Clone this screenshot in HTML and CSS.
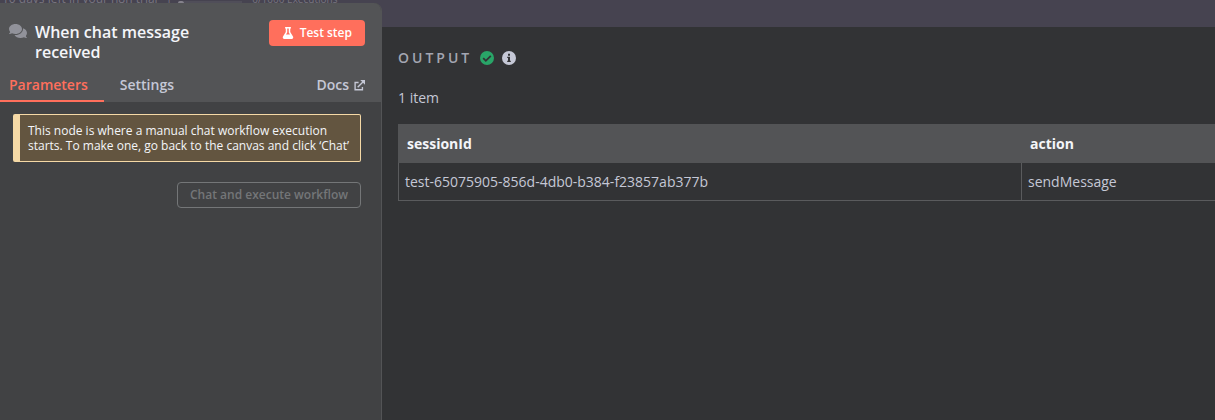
FILE: index.html
```html
<!DOCTYPE html>
<html lang="en">
<head>
    <meta charset="UTF-8">
    <meta name="viewport" content="width=device-width, initial-scale=1.0">
    <title>When chat message received</title>
    <link rel="stylesheet" href="styles.css">
</head>
<body>
    <div class="trial-bar">
        <span class="trial-days">10 days left in your n8n trial</span>
        <span class="trial-divider">|</span>
        <span class="trial-knob"></span>
        <span class="trial-track"></span>
        <span class="trial-usage">0/1000 Executions</span>
    </div>
    <div class="details">
        <section class="node-panel">
            <header class="node-header">
                <div class="node-heading">
                    <svg class="chat-icon" viewBox="0 0 576 512" aria-hidden="true"><path fill="currentColor" d="M416 192c0-88.400-93.100-160-208-160S0 103.600 0 192c0 34.300 14.100 65.900 38 92-13.400 30.200-35.500 54.200-35.800 54.500-2.200 2.300-2.800 5.700-1.500 8.700S4.800 352 8 352c36.600 0 66.900-12.300 88.700-25 32.200 15.700 70.300 25 111.300 25 114.900 0 208-71.600 208-160zm122 220c23.900-26 38-57.700 38-92 0-66.900-53.500-124.200-129.300-148.100.9 6.600 1.300 13.300 1.300 20.100 0 105.900-107.700 192-240 192-10.800 0-21.300-.8-31.700-1.900C207.800 439.600 281.800 480 368 480c41 0 79.100-9.200 111.300-25 21.800 12.700 52.100 25 88.700 25 3.200 0 6.100-1.900 7.300-4.800 1.300-2.900.7-6.300-1.500-8.700-.3-.3-22.400-24.200-35.800-54.500z"/></svg>
                    <h1>When chat message received</h1>
                    <button class="test-button" type="button">
                        <svg viewBox="0 0 448 512" aria-hidden="true"><path fill="currentColor" d="M437.200 403.500L320 215V64h8c13.300 0 24-10.700 24-24V24c0-13.300-10.700-24-24-24H120c-13.300 0-24 10.700-24 24v16c0 13.300 10.700 24 24 24h8v151L10.800 403.500C-18.500 450.600 15.300 512 70.900 512h306.200c55.700 0 89.400-61.500 60.100-108.500zM137.900 320l48.200-77.600c3.700-5.200 5.800-11.600 5.800-18.400V64h64v160c0 6.900 2.200 13.200 5.800 18.400l48.200 77.600z"/></svg>
                        Test step
                    </button>
                </div>
                <nav class="tabs">
                    <a class="tab tab-active" href="#parameters">Parameters</a>
                    <a class="tab" href="#settings">Settings</a>
                    <a class="tab tab-docs" href="#docs">Docs
                        <svg viewBox="0 0 12 12" aria-hidden="true"><path fill="none" stroke="currentColor" stroke-width="1.500" d="M5 2.700H1.200v8h8V7.500M4 8l6-6"/><path fill="currentColor" d="M6.800 0H12v5.200z"/></svg>
                    </a>
                </nav>
            </header>
            <div class="node-body">
                <p class="notice">This node is where a manual chat workflow execution starts. To make one, go back to the canvas and click ‘Chat’</p>
                <button class="chat-button" type="button" disabled>Chat and execute workflow</button>
            </div>
        </section>
        <main class="output">
            <div class="output-title">
                <h2>OUTPUT</h2>
                <svg class="icon-success" viewBox="0 0 14 14" aria-hidden="true"><circle cx="7" cy="7" r="7" fill="currentColor"/><path fill="none" stroke="#323335" stroke-width="1.800" d="M3.200 7.200l2.600 2.600 5-5"/></svg>
                <svg class="icon-info" viewBox="0 0 14 14" aria-hidden="true"><circle cx="7" cy="7" r="7" fill="currentColor"/><path fill="#323335" d="M6 2.700h2v2H6zM5.200 5.700H8v4h.8V11H5.200V9.700H6V7h-.8z"/></svg>
            </div>
            <p class="item-count">1 item</p>
            <table class="data">
                <thead>
                    <tr><th>sessionId</th><th class="col-action">action</th></tr>
                </thead>
                <tbody>
                    <tr><td>test-65075905-856d-4db0-b384-f23857ab377b</td><td>sendMessage</td></tr>
                </tbody>
            </table>
        </main>
    </div>
</body>
</html>
```
FILE: styles.css
```css
* {
    box-sizing: border-box;
}
body {
    display: flex;
    flex-direction: column;
    min-height: 100vh;
    margin: 0;
    background-color: #464350;
    color: #c5c8d6;
    font-family: "Open Sans", sans-serif;
    font-size: 14px;
}
h1, h2, p {
    margin: 0;
}
button {
    font-family: inherit;
    font-size: 12px;
    font-weight: 600;
    border-radius: 4px;
}

/* only the bottom edge of the trial banner shows above the panel */
.trial-bar {
    display: flex;
    align-items: flex-end;
    height: 3px;
    padding-left: 2px;
    overflow: hidden;
    color: #77747f;
    font-size: 12px;
    line-height: 8px;
    white-space: nowrap;
}
.trial-divider {
    margin-left: 8px;
}
.trial-knob {
    width: 6px;
    height: 2px;
    margin-left: 6px;
    border-radius: 3px 3px 0 0;
    background-color: #85828c;
}
.trial-track {
    width: 58px;
    height: 2px;
    background-color: #504e59;
}
.trial-usage {
    margin-left: 10px;
    font-size: 10px;
}

.details {
    display: flex;
    flex: 1;
}
.node-panel {
    flex: 0 0 382px;
    border-right: 1px solid #535456;
    border-top-right-radius: 8px;
    background-color: #414244;
    overflow: hidden;
}
.node-header {
    background-color: #535456;
}
.node-heading {
    display: flex;
    align-items: flex-start;
    padding: 17px 16px 0 9px;
}
.chat-icon {
    flex: none;
    width: 18px;
    height: 16px;
    margin: 3px 8px 0 0;
    color: #91929a;
}
.node-heading h1 {
    flex: 1;
    padding: 2px 40px 0 0;
    color: #f4f5f9;
    font-size: 16px;
    font-weight: 600;
    line-height: 20px;
}
.test-button {
    display: flex;
    align-items: center;
    gap: 6px;
    height: 26px;
    padding: 0 13px 1px;
    border: none;
    background-color: #ff6f5c;
    color: #fff;
}
.test-button svg {
    width: 12px;
    height: 12px;
}
.tabs {
    display: flex;
    padding: 10px 16px 0 0;
}
.tab {
    padding: 3px 16px 5px;
    border-bottom: 2px solid transparent;
    color: #c5c8d6;
    font-weight: 600;
    line-height: 20px;
    text-decoration: none;
}
.tab-active {
    padding-left: 9px;
    border-color: #ff6f5c;
    color: #ff6f5c;
}
.tab-docs {
    display: flex;
    align-items: center;
    gap: 5px;
    margin-left: auto;
    padding-right: 0;
}
.tab-docs svg {
    width: 11px;
    height: 11px;
}
.node-body {
    display: flex;
    flex-direction: column;
    align-items: flex-end;
    gap: 20px;
    padding: 12px 20px 12px 13px;
}
.notice {
    width: 100%;
    padding: 8px;
    border: 1px solid #f5d9a6;
    border-left-width: 7px;
    border-radius: 2px;
    background-color: #635540;
    color: #f4f5f9;
    font-size: 12px;
    line-height: 15px;
}
.chat-button {
    height: 26px;
    padding: 0 12px 1px;
    border: 1px solid #747678;
    background-color: transparent;
    color: #747678;
}

.output {
    flex: 1;
    min-width: 0;
    margin-top: 24px;
    padding: 21px 0 0 16px;
    background-color: #323335;
}
.output-title {
    display: flex;
    align-items: center;
    height: 20px;
}
.output-title h2 {
    color: #a3a6b2;
    font-size: 14px;
    font-weight: 600;
    letter-spacing: 3px;
    line-height: 18px;
}
.output-title svg {
    width: 14px;
    height: 14px;
    margin-left: 8px;
}
.icon-success {
    color: #29a568;
}
.icon-info {
    color: #c5c8d6;
}
.item-count {
    margin: 20px 0 16px;
    line-height: 20px;
}
.data {
    width: 100%;
    border-collapse: separate;
    border-spacing: 0;
    line-height: 20px;
    text-align: left;
}
.data th {
    padding: 10px 9px 9px;
    background-color: #535456;
    color: #f4f5f9;
    font-weight: 700;
}
.data td {
    padding: 9px 6px 8px;
    border-left: 1px solid #5a5b5d;
    border-bottom: 1px solid #5a5b5d;
}
.col-action {
    width: 194px;
}
```
